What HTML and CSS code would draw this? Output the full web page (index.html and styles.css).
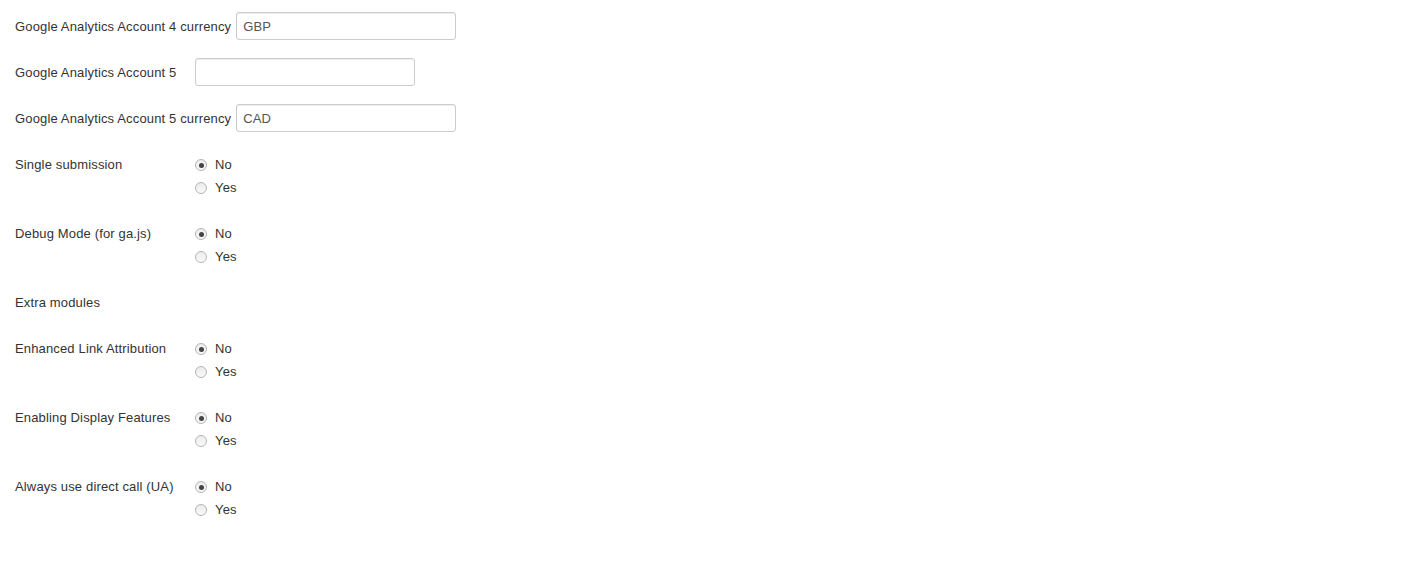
FILE: index.html
```html
<!DOCTYPE html>
<html lang="en">
<head>
  <meta charset="UTF-8">
  <title>Google Analytics options</title>
  <link rel="stylesheet" href="styles.css">
</head>
<body>

  <form class="options-form">
    <div class="control-group">
      <label class="control-label" for="ga4-currency">Google Analytics Account 4 currency</label>
      <input type="text" id="ga4-currency" class="text-input" value="GBP">
    </div>

    <div class="control-group">
      <label class="control-label" for="ga5">Google Analytics Account 5</label>
      <input type="text" id="ga5" class="text-input" value="">
    </div>

    <div class="control-group">
      <label class="control-label" for="ga5-currency">Google Analytics Account 5 currency</label>
      <input type="text" id="ga5-currency" class="text-input" value="CAD">
    </div>

    <div class="control-group">
      <span class="control-label">Single submission</span>
      <div class="radio-list">
        <label class="radio"><input type="radio" name="single" value="0" checked> No</label>
        <label class="radio"><input type="radio" name="single" value="1"> Yes</label>
      </div>
    </div>

    <div class="control-group">
      <span class="control-label">Debug Mode (for ga.js)</span>
      <div class="radio-list">
        <label class="radio"><input type="radio" name="debug" value="0" checked> No</label>
        <label class="radio"><input type="radio" name="debug" value="1"> Yes</label>
      </div>
    </div>

    <div class="control-group">
      <span class="control-label">Extra modules</span>
    </div>

    <div class="control-group">
      <span class="control-label">Enhanced Link Attribution</span>
      <div class="radio-list">
        <label class="radio"><input type="radio" name="linkattr" value="0" checked> No</label>
        <label class="radio"><input type="radio" name="linkattr" value="1"> Yes</label>
      </div>
    </div>

    <div class="control-group">
      <span class="control-label">Enabling Display Features</span>
      <div class="radio-list">
        <label class="radio"><input type="radio" name="display" value="0" checked> No</label>
        <label class="radio"><input type="radio" name="display" value="1"> Yes</label>
      </div>
    </div>

    <div class="control-group">
      <span class="control-label">Always use direct call (UA)</span>
      <div class="radio-list">
        <label class="radio"><input type="radio" name="direct" value="0" checked> No</label>
        <label class="radio"><input type="radio" name="direct" value="1"> Yes</label>
      </div>
    </div>
  </form>

</body>
</html>
```

FILE: styles.css
```css
body {
  margin: 0;
  background-color: #ffffff;
  color: #333333;
  font-family: "Liberation Sans", Arial, sans-serif;
  font-size: 13px;
  line-height: 18px;
  letter-spacing: 0.15px;
}

.options-form {
  padding: 12px 15px;
}

.control-group {
  display: flex;
  align-items: flex-start;
  min-height: 28px;
  margin-bottom: 18px;
}

.control-label {
  min-width: 175px;
  margin-right: 5px;
  padding-top: 6px;
  white-space: nowrap;
}

.text-input {
  box-sizing: border-box;
  width: 220px;
  height: 28px;
  padding: 4px 6px;
  border: 1px solid #cccccc;
  border-radius: 3px;
  font-family: inherit;
  font-size: 13px;
  letter-spacing: 0.15px;
  color: #555555;
  box-shadow: inset 0 1px 1px rgba(0, 0, 0, 0.075);
}

.radio-list {
  padding-top: 6px;
}

.radio {
  display: flex;
  align-items: center;
  margin-bottom: 5px;
}

.radio:last-child {
  margin-bottom: 4px;
}

.radio input[type="radio"] {
  appearance: none;
  -webkit-appearance: none;
  box-sizing: border-box;
  width: 12px;
  height: 12px;
  margin: 0 8px 0 0;
  border: 1px solid #b5b5b5;
  border-radius: 50%;
  background: linear-gradient(#ececec, #f9f9f9);
  position: relative;
}

.radio input[type="radio"]:checked::after {
  content: "";
  position: absolute;
  top: 2.5px;
  left: 2.5px;
  width: 5px;
  height: 5px;
  border-radius: 50%;
  background: #444444;
}
```
